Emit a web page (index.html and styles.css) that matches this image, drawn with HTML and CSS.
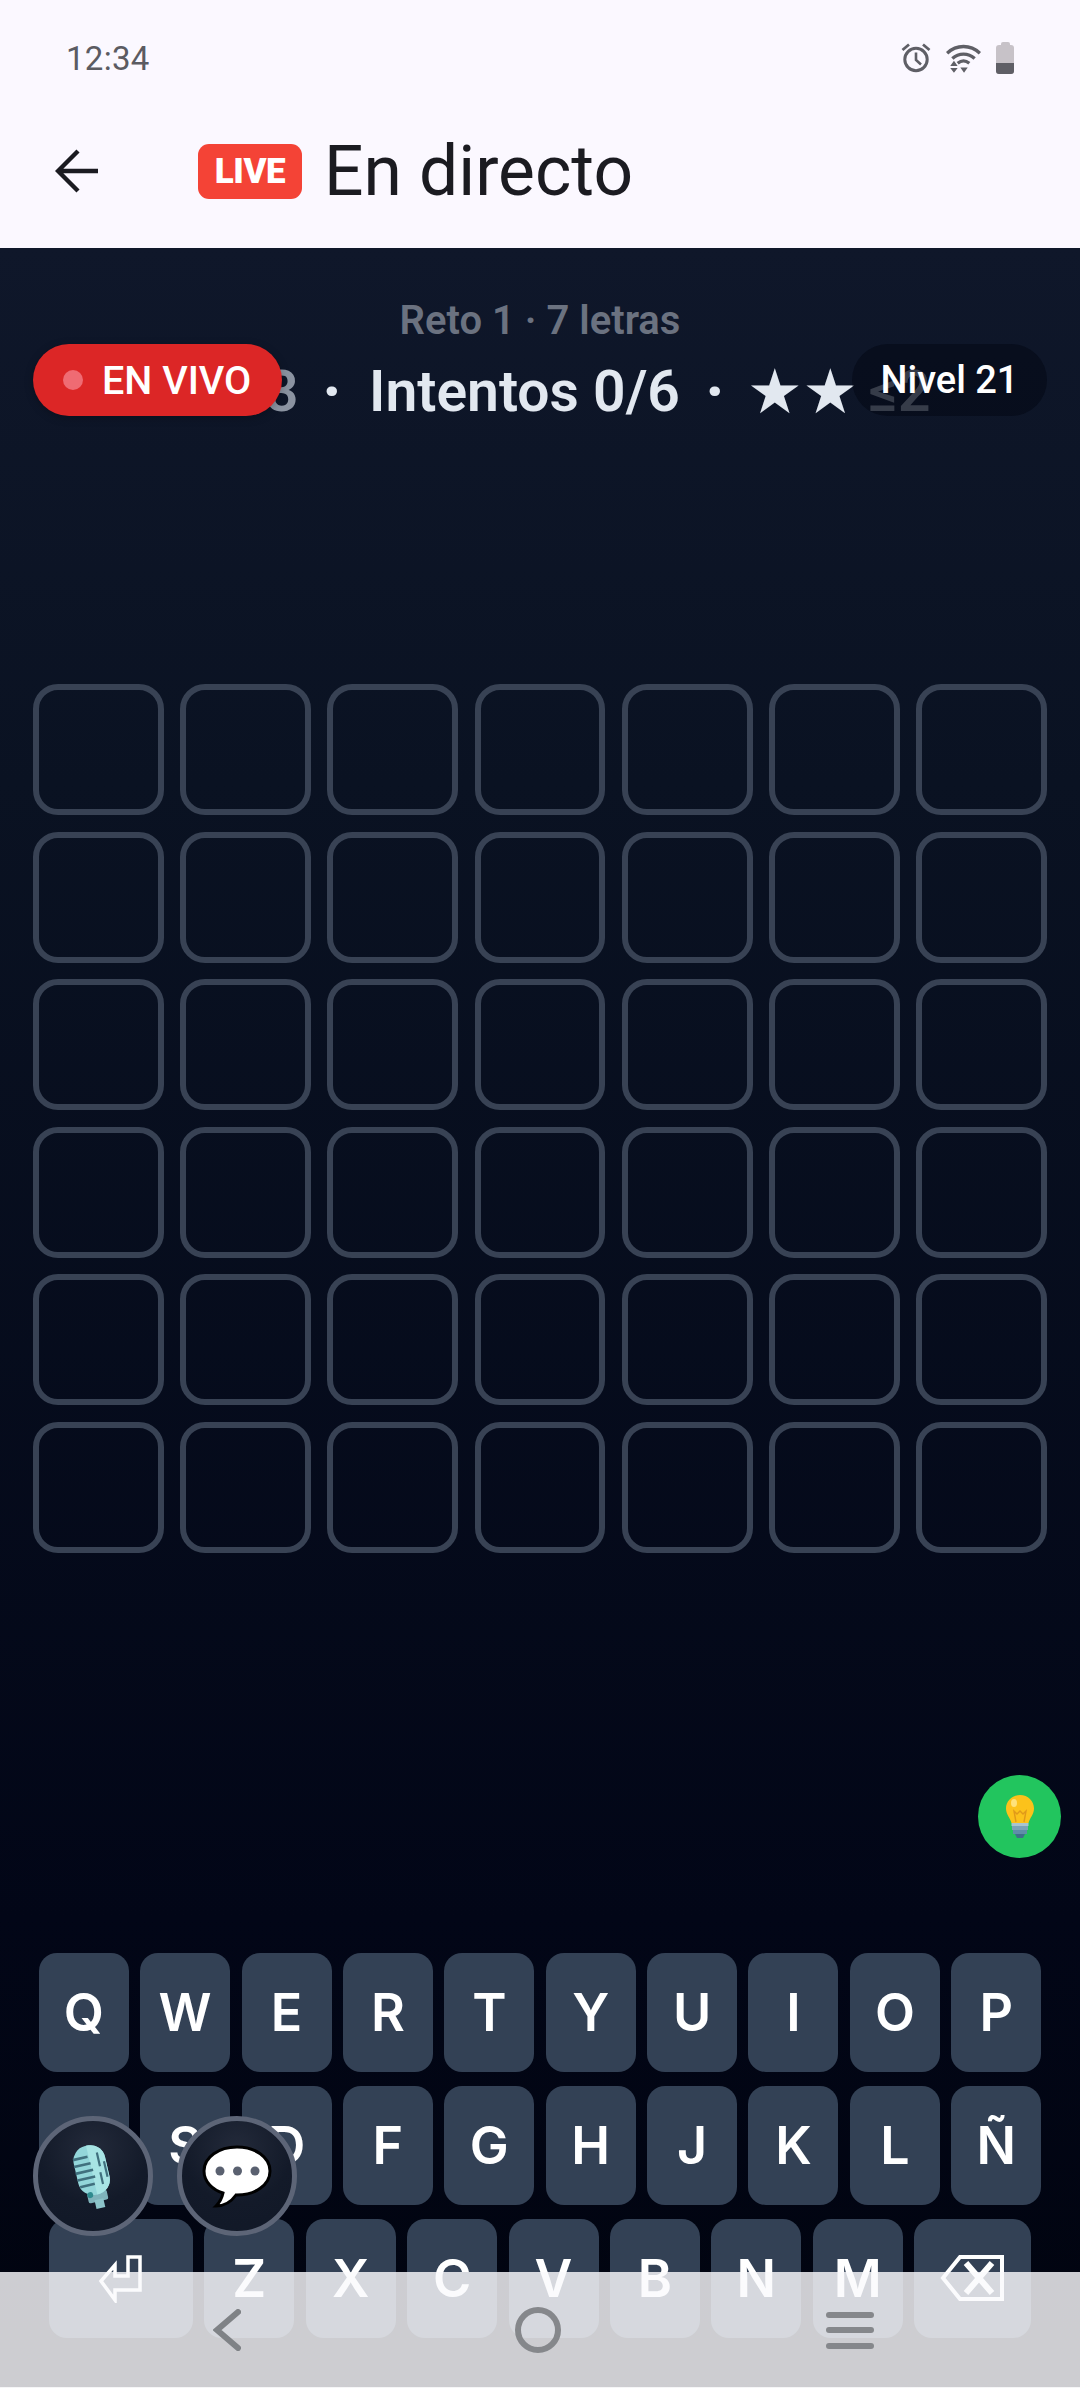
FILE: index.html
```html
<!DOCTYPE html>
<html lang="es">
<head>
<meta charset="utf-8">
<title>En directo</title>
<link rel="stylesheet" href="styles.css">
</head>
<body>
<div class="screen">
  <header class="top">
    <div class="status">
      <span class="time">12:34</span>
      <div class="status-icons">
        <svg class="ic-alarm" viewBox="0 0 30 30"><circle cx="15" cy="16.5" r="11.2" fill="none" stroke="#5f5f66" stroke-width="3"/><path d="M15 9.5v7.5l5 4.5" fill="none" stroke="#5f5f66" stroke-width="2.6"/><path d="M1.5 7 8 1.5M28.5 7 22 1.5" fill="none" stroke="#5f5f66" stroke-width="2.8"/></svg>
        <svg class="ic-wifi" viewBox="0 0 33 28"><path d="M1 9.5C10 1 23 1 32 9.5" fill="none" stroke="#5f5f66" stroke-width="3.2"/><path d="M6 14.5C12 9 21 9 27 14.5" fill="none" stroke="#5f5f66" stroke-width="3.2"/><path d="M11 19C14.500 16 18.500 16 22 19" fill="none" stroke="#5f5f66" stroke-width="3"/><path d="M4 21.500h7l-3.500-5zM4 23.500h7l-3.500 4.500zM13.500 23h7l-3.500 5z" fill="#5f5f66"/></svg>
        <div class="battery"><div class="battery-cap"></div><div class="battery-body"><div class="battery-level"></div></div></div>
      </div>
    </div>
    <div class="appbar">
      <svg class="ic-back" viewBox="0 0 44 44"><path d="M43 22H3M23 2 3 22l20 20" fill="none" stroke="#1b1b21" stroke-width="4.400"/></svg>
      <span class="live">LIVE</span>
      <h1 class="title">En directo</h1>
    </div>
  </header>

  <main class="game">
    <p class="challenge">Reto 1 · 7 letras</p>
    <div class="stats">
      <span class="stat-dim">3</span>
      <span class="dot">·</span>
      <span class="stat">Intentos 0/6</span>
      <span class="dot dot-tight">·</span>
      <span class="stars">★★</span>
      <span class="stat-dim">≤2</span>
    </div>

    <div class="board">
      <i class="cell"></i><i class="cell"></i><i class="cell"></i><i class="cell"></i><i class="cell"></i><i class="cell"></i><i class="cell"></i>
      <i class="cell"></i><i class="cell"></i><i class="cell"></i><i class="cell"></i><i class="cell"></i><i class="cell"></i><i class="cell"></i>
      <i class="cell"></i><i class="cell"></i><i class="cell"></i><i class="cell"></i><i class="cell"></i><i class="cell"></i><i class="cell"></i>
      <i class="cell"></i><i class="cell"></i><i class="cell"></i><i class="cell"></i><i class="cell"></i><i class="cell"></i><i class="cell"></i>
      <i class="cell"></i><i class="cell"></i><i class="cell"></i><i class="cell"></i><i class="cell"></i><i class="cell"></i><i class="cell"></i>
      <i class="cell"></i><i class="cell"></i><i class="cell"></i><i class="cell"></i><i class="cell"></i><i class="cell"></i><i class="cell"></i>
    </div>

    <div class="keyboard">
      <div class="key-row">
        <span class="key">Q</span><span class="key">W</span><span class="key">E</span><span class="key">R</span><span class="key">T</span><span class="key">Y</span><span class="key">U</span><span class="key">I</span><span class="key">O</span><span class="key">P</span>
      </div>
      <div class="key-row">
        <span class="key">A</span><span class="key">S</span><span class="key">D</span><span class="key">F</span><span class="key">G</span><span class="key">H</span><span class="key">J</span><span class="key">K</span><span class="key">L</span><span class="key">Ñ</span>
      </div>
      <div class="key-row">
        <span class="key key-enter"><svg class="ic-enter" viewBox="0 0 48 50"><path d="M43 4H31V23H18V12L4 28 18 47V37H43Z" fill="none" stroke="#fff" stroke-width="3.500"/></svg></span>
        <span class="key">Z</span><span class="key">X</span><span class="key">C</span><span class="key">V</span><span class="key">B</span><span class="key">N</span><span class="key">M</span>
        <span class="key key-back"><svg class="ic-del" viewBox="0 0 66 48"><path d="M62 3H20L3 24l17 21H62Z" fill="none" stroke="#fff" stroke-width="4"/><path d="M26 9 52 39M52 9 26 39" fill="none" stroke="#fff" stroke-width="6"/></svg></span>
      </div>
    </div>
  </main>

  <div class="pill pill-live"><i class="pill-dot"></i>EN VIVO</div>
  <div class="pill pill-level">Nivel 21</div>

  <button class="round round-mic" aria-label="Micrófono">
    <svg class="ic-mic" viewBox="0 0 44 68">
      <g transform="rotate(-13 22 34)">
        <rect x="12" y="50" width="20" height="10" rx="2" fill="#7fb3bb"/>
        <rect x="18" y="58" width="9" height="9" fill="#8cc4ca"/>
        <rect x="6" y="3" width="32" height="50" rx="15" fill="#93d6da"/>
        <path d="M22 3c9 0 16 6 16 15v20c0 9-7 15-16 15z" fill="#a7e4e4"/>
        <path d="M6 14h15M5.500 21h17M5.500 28h18M6 35h18M7 42h15" stroke="#40707e" stroke-width="2.600" fill="none"/>
        <path d="M31 12v14M36 22v16M30 32v12" stroke="#40707e" stroke-width="2.200" fill="none"/>
        <circle cx="15" cy="52" r="3" fill="#2f8a8e"/>
      </g>
    </svg>
  </button>
  <button class="round round-chat" aria-label="Chat">
    <svg class="ic-chat" viewBox="0 0 70 63">
      <path d="M35 2C17 2 2 12 2 26c0 11 9 19 19 22-1 5-4 10-7 13 8 0 15-4 20-11h1c18 0 33-10 33-24S53 2 35 2Z" fill="#fff" stroke="#000" stroke-width="3"/>
      <circle cx="18" cy="26" r="4.500" fill="#5a6170"/><circle cx="35.500" cy="26" r="4.500" fill="#5a6170"/><circle cx="53" cy="26" r="4.500" fill="#5a6170"/>
    </svg>
  </button>
  <button class="round-hint" aria-label="Pista">
    <svg class="ic-bulb" viewBox="0 0 30 46">
      <path d="M15 1C7 1 1 7 1 14.500c0 6 4 9 5.500 14.500h17C25 23.500 29 20.500 29 14.500 29 7 23 1 15 1Z" fill="#fcc21b"/>
      <path d="M11 28 9 17l3 3 3-3 3 3 3-3-2 11" fill="none" stroke="#e09a1a" stroke-width="1.400"/>
      <path d="M6.500 29h17v3h-17z" fill="#a9c4cf"/><path d="M7 32h16v4H7z" fill="#7ba3b8"/><path d="M8 36h14v4H8z" fill="#5f8ea8"/><path d="M10 40h10l-2 4h-6z" fill="#3f6f8a"/>
      <ellipse cx="9" cy="9" rx="3" ry="4" fill="#ffe27a"/>
    </svg>
  </button>

  <nav class="navbar">
    <svg class="ic-nav-back" viewBox="0 0 28 42"><path d="M25 3 4 21l21 18" fill="none" stroke="#7f8286" stroke-width="6" stroke-linecap="round"/></svg>
    <i class="nav-home"></i>
    <div class="nav-menu"><i></i><i></i><i></i></div>
  </nav>
</div>
</body>
</html>
```

FILE: styles.css
```css
* { box-sizing: border-box; }
html, body { margin: 0; padding: 0; }
body { width: 1080px; height: 2388px; overflow: hidden; font-family: Roboto, "Noto Sans", sans-serif; }

.screen { position: relative; width: 1080px; height: 2388px; display: flex; flex-direction: column; overflow: hidden; }

.top { height: 248px; background: #fbf8ff; flex: none; }
.status { height: 116px; padding: 0 66px 0 66px; display: flex; align-items: center; justify-content: space-between; }
.time { font-size: 33px; color: #5b5b62; letter-spacing: 0.3px; }
.status-icons { display: flex; align-items: center; gap: 15px; }
.ic-alarm { width: 30px; height: 30px; display: block; }
.ic-wifi { width: 35px; height: 30px; display: block; }
.battery { width: 18px; display: flex; flex-direction: column; align-items: center; }
.battery-cap { width: 9px; height: 3px; background: #c7c2c8; border-radius: 2px 2px 0 0; }
.battery-body { width: 18px; height: 29px; background: #c7c2c8; border-radius: 3px; display: flex; align-items: flex-end; overflow: hidden; }
.battery-level { width: 100%; height: 11px; background: #5f5f66; }

.appbar { height: 110px; padding-left: 55px; display: flex; align-items: center; }
.ic-back { width: 44px; height: 44px; flex: none; margin-right: 99px; }
.live { width: 104px; height: 55px; border-radius: 11px; background: #f44336; color: #fff; font-size: 35px; font-weight: 900; letter-spacing: -0.5px; display: flex; align-items: center; justify-content: center; margin-right: 22px; }
.title { margin: 0; font-size: 69.500px; font-weight: 400; color: #1b1b21; }

.game { flex: 1; display: flex; flex-direction: column; background: linear-gradient(180deg, #0f172a 0%, #0a1222 25%, #020617 78%, #01040f 100%); }
.challenge { margin: 50px 0 0; height: 46px; line-height: 46px; text-align: center; font-size: 40px; font-weight: 600; color: #6b7280; }
.stats { height: 70px; margin-top: 12px; padding-left: 266px; display: flex; align-items: center; font-size: 57px; font-weight: 600; color: #e2e8f0; }
.stat-dim { color: #6b7280; }
.stats .stat-dim:first-child { color: #8b93a1; width: 29px; }
.dot { width: 74px; text-align: center; font-weight: 900; }
.dot-tight { width: 70px; }
.stat { white-space: nowrap; }
.stars { font-family: "DejaVu Sans", sans-serif; font-size: 62px; margin-left: -3px; margin-right: 11px; }

.board { margin-top: 258px; padding: 0 33px; display: grid; grid-template-columns: repeat(7, 1fr); grid-auto-rows: 131px; gap: 16.500px; }
.cell { display: block; border: 6px solid #384254; border-radius: 25px; }

.keyboard { margin-top: auto; padding-bottom: 50px; display: flex; flex-direction: column; gap: 13.500px; }
.key-row { display: flex; justify-content: center; gap: 11.400px; }
.key { width: 90px; height: 119.500px; flex: none; border-radius: 18px; background: #334155; color: #fff; font-family: Inter, Roboto, sans-serif; font-size: 52px; font-weight: 600; display: flex; align-items: center; justify-content: center; }
.key-enter { width: 144px; }
.key-back { width: 117px; }
.ic-enter { width: 48px; height: 50px; }
.ic-del { width: 66px; height: 48px; }

.pill { position: absolute; top: 344px; height: 72px; border-radius: 36px; color: #fff; font-size: 39.500px; font-weight: 500; display: flex; align-items: center; }
.pill-live { left: 33px; width: 249px; padding-left: 30px; background: #dc2626; box-shadow: 0 2px 8px rgba(0,0,0,.25); }
.pill-dot { width: 20px; height: 20px; border-radius: 50%; background: #ef6b73; margin-right: 19px; }
.pill-level { left: 852px; width: 195px; font-size: 38px; justify-content: center; background: rgba(2,6,18,.5); }

.round { position: absolute; top: 2116px; width: 120px; height: 120px; padding: 0; border-radius: 50%; border: 5px solid #5d6577; background: radial-gradient(circle at 50% 25%, #232a3a 0%, #131a29 55%, #111827 100%); display: flex; align-items: center; justify-content: center; }
.round-mic { left: 33px; }
.round-chat { left: 177px; }
.ic-mic { width: 44px; height: 68px; }
.ic-chat { width: 70px; height: 63px; }
.round-hint { position: absolute; left: 978px; top: 1775px; width: 83px; height: 83px; padding: 0; border: 0; border-radius: 50%; background: #22c55e; display: flex; align-items: center; justify-content: center; }
.ic-bulb { width: 30px; height: 46px; }

.navbar { position: absolute; left: 0; right: 0; bottom: 0; height: 116px; padding: 0 206px 0 213px; display: flex; align-items: center; justify-content: space-between; background: rgba(250,250,252,.82); box-shadow: inset 0 -1px 0 #f5f5f7; }
.ic-nav-back { width: 28px; height: 42px; }
.nav-home { width: 46px; height: 46px; border: 6px solid #85878b; border-radius: 50%; margin-left: 8px; }
.nav-menu { width: 48px; display: flex; flex-direction: column; gap: 9.500px; }
.nav-menu i { display: block; height: 6px; border-radius: 3px; background: #85878b; }
```
